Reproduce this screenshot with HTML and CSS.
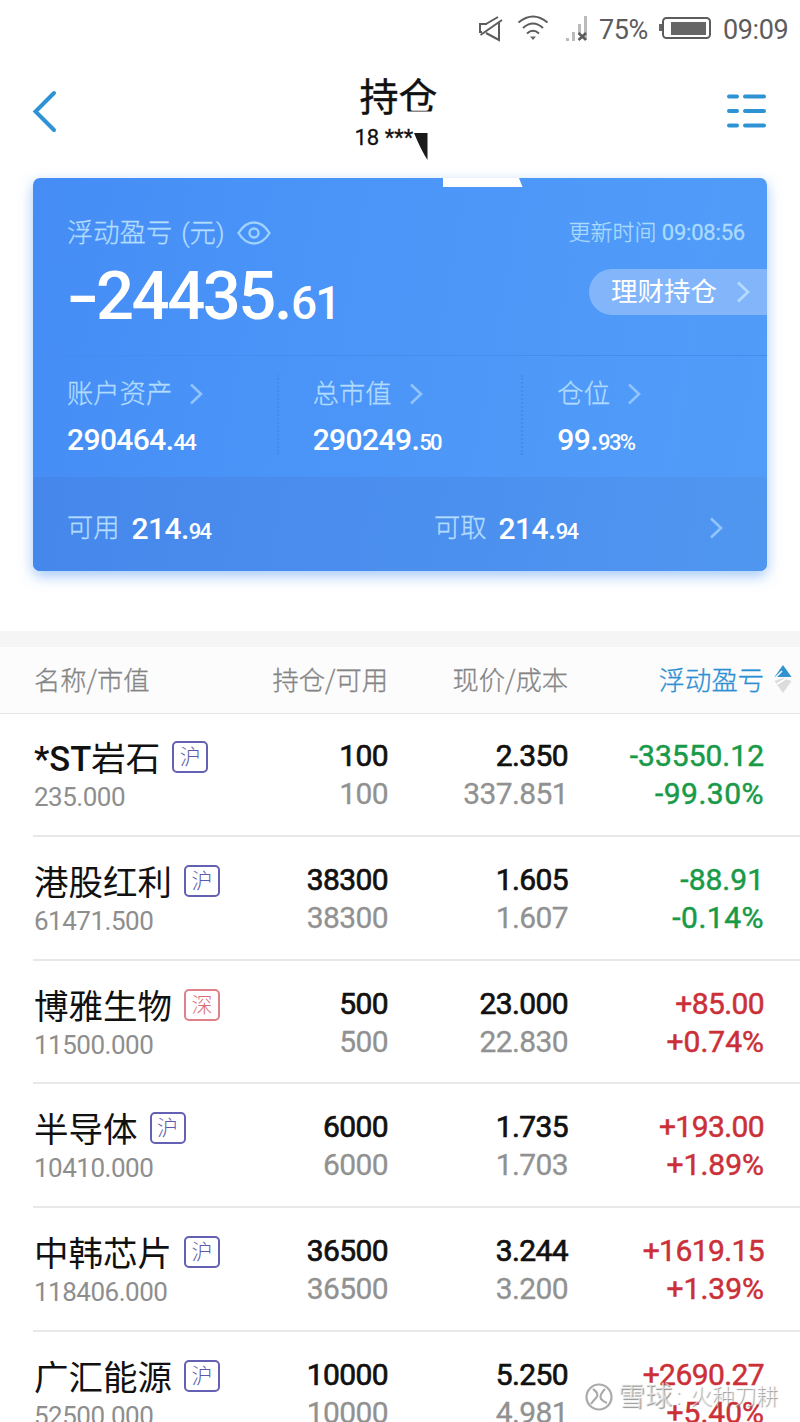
FILE: index.html
```html
<!DOCTYPE html>
<html lang="zh-CN">
<head>
  <meta charset="UTF-8" />
  <meta name="viewport" content="width=device-width, initial-scale=1.0" />
  <title>持仓</title>
  <link rel="stylesheet" href="styles.css">
</head>
<body>
  <div class="status-bar">
    <svg class="mute" width="26" height="28" viewBox="0 0 26 28"><path d="M9 9 H2 V17 H4 M8 9 L20 2 M21 7 V25 L8 18 M2.500 20 L24 5" /></svg>
    <svg class="wifi" width="32" height="28" viewBox="0 0 32 28"><path d="M1.5 7.5 Q16 -4.5 30.5 7.5 M6 13 Q16 4 26 13 M10 18.5 Q16 13 22 18.5" /><path class="dot" d="M13 21.5 H19 L16 25 Z" /></svg>
    <svg class="signal" width="22" height="27" viewBox="0 0 22 27"><path class="bars" d="M0 23h3v3H0z M6 17h3v9H6z M12 9h3v9h-3z M18 1h3v24h-3z" /><path class="cross" d="M12.5 18 L20 25 M20 18 L12.5 25" /></svg>
    <span class="battery-text">75%</span>
    <svg class="battery" width="52" height="24" viewBox="0 0 52 24"><rect x="4" y="1" width="47" height="20" rx="3.5" /><path class="fill" d="M12 5h35v13H12z M0 7h3v7H0z" /></svg>
    <span class="clock">09:09</span>
  </div>

  <div class="header">
    <svg class="back" width="26" height="44" viewBox="0 0 26 44"><path d="M22 4 L3.5 22.5 L22 41" /></svg>
    <div class="title">
      <h1>持仓</h1>
      <p>18 ***</p>
      <svg class="smudge" width="76" height="56" viewBox="0 0 76 56"><path class="white" d="M38 7.500 H70 V0 H76 V17 H38z" /><path d="M50 29 H63.5 V56 Q57 46 50 29z" /></svg>
    </div>
    <svg class="menu" width="40" height="38" viewBox="0 0 40 38"><path d="M2 3.500h8 M18 3.500h19 M2 18h8 M18 18h19 M2 32.500h8 M18 32.500h19" /></svg>
  </div>

  <div class="card">
    <svg class="notch" width="80" height="9" viewBox="0 0 80 9"><path d="M0 0 H76 L79.500 9 H0z" /></svg>
    <div class="profit">
      <div class="profit-left">
        <div class="label">浮动盈亏<span class="unit">(元)</span>
          <svg class="eye" width="34" height="24" viewBox="0 0 34 24"><path d="M1.500 12 C10 -2 24 -2 32.500 12 C24 26 10 26 1.500 12z" /><circle cx="17" cy="12" r="4.500" /></svg>
        </div>
        <div class="total"><span class="sign">-</span>24435.<small>61</small></div>
      </div>
      <div class="profit-right">
        <div class="update">更新时间 <span>09:08:56</span></div>
        <div class="pill">理财持仓<svg class="arrow" width="14" height="22" viewBox="0 0 14 22"><path d="M2 1.500 L12 11 L2 20.500" /></svg></div>
      </div>
    </div>
    <div class="assets">
      <div class="asset">
        <div class="label">账户资产<svg class="arrow" width="14" height="22" viewBox="0 0 14 22"><path d="M2 1.500 L12 11 L2 20.500" /></svg></div>
        <div class="num">290464.<small>44</small></div>
      </div>
      <div class="asset">
        <div class="label">总市值<svg class="arrow" width="14" height="22" viewBox="0 0 14 22"><path d="M2 1.500 L12 11 L2 20.500" /></svg></div>
        <div class="num">290249.<small>50</small></div>
      </div>
      <div class="asset">
        <div class="label">仓位<svg class="arrow" width="14" height="22" viewBox="0 0 14 22"><path d="M2 1.500 L12 11 L2 20.500" /></svg></div>
        <div class="num">99.<small>93%</small></div>
      </div>
    </div>
    <div class="cash">
      <div class="cash-item"><span class="label">可用</span><span class="num">214.<small>94</small></span></div>
      <div class="cash-item"><span class="label">可取</span><span class="num">214.<small>94</small></span></div>
      <svg class="arrow" width="14" height="22" viewBox="0 0 14 22"><path d="M2 1.500 L12 11 L2 20.500" /></svg>
    </div>
  </div>

  <div class="list">
    <div class="list-head">
      <span>名称/市值</span>
      <span>持仓/可用</span>
      <span>现价/成本</span>
      <span class="sorted">浮动盈亏<svg class="sort" width="18" height="30" viewBox="0 0 18 30"><path class="up" d="M9 1 L17.500 13 H.5z" /><path class="down" d="M.5 17 L9 14 L17.500 17 L9 29z" /><path class="line" d="M1 14 L8 7 M3 20 L13 14" /></svg></span>
    </div>

    <!-- Holdings -->
    <div class="row">
      <div class="stock"><div class="name"><b>*ST</b>岩石<i class="tag">沪</i></div><div class="value">235.000</div></div>
      <div class="cell"><p>100</p><p>100</p></div>
      <div class="cell"><p>2.350</p><p>337.851</p></div>
      <div class="cell down"><p>-33550.12</p><p>-99.30%</p></div>
    </div>
    <div class="row">
      <div class="stock"><div class="name">港股红利<i class="tag">沪</i></div><div class="value">61471.500</div></div>
      <div class="cell"><p>38300</p><p>38300</p></div>
      <div class="cell"><p>1.605</p><p>1.607</p></div>
      <div class="cell down"><p>-88.91</p><p>-0.14%</p></div>
    </div>
    <div class="row">
      <div class="stock"><div class="name">博雅生物<i class="tag sz">深</i></div><div class="value">11500.000</div></div>
      <div class="cell"><p>500</p><p>500</p></div>
      <div class="cell"><p>23.000</p><p>22.830</p></div>
      <div class="cell up"><p>+85.00</p><p>+0.74%</p></div>
    </div>
    <div class="row">
      <div class="stock"><div class="name">半导体<i class="tag">沪</i></div><div class="value">10410.000</div></div>
      <div class="cell"><p>6000</p><p>6000</p></div>
      <div class="cell"><p>1.735</p><p>1.703</p></div>
      <div class="cell up"><p>+193.00</p><p>+1.89%</p></div>
    </div>
    <div class="row">
      <div class="stock"><div class="name">中韩芯片<i class="tag">沪</i></div><div class="value">118406.000</div></div>
      <div class="cell"><p>36500</p><p>36500</p></div>
      <div class="cell"><p>3.244</p><p>3.200</p></div>
      <div class="cell up"><p>+1619.15</p><p>+1.39%</p></div>
    </div>
    <div class="row">
      <div class="stock"><div class="name">广汇能源<i class="tag">沪</i></div><div class="value">52500.000</div></div>
      <div class="cell"><p>10000</p><p>10000</p></div>
      <div class="cell"><p>5.250</p><p>4.981</p></div>
      <div class="cell up"><p>+2690.27</p><p>+5.40%</p></div>
    </div>
  </div>

  <div class="watermark">
    <svg width="28" height="28" viewBox="0 0 28 28"><circle cx="14" cy="14" r="12.500" /><path d="M8 6 Q15 11 11 15 Q8 18 6 21 M20 6 Q14 12 16 16 Q19 19 22 20" /></svg>
    <b>雪球</b><span class="colon">:</span><span>火种刀耕</span>
  </div>
</body>
</html>
```
FILE: styles.css
```css
* {
  box-sizing: border-box;
}
body {
  position: relative;
  width: 800px;
  height: 1422px;
  margin: 0;
  overflow: hidden;
  background: #fff;
  font-family: Roboto, "Noto Sans CJK SC", sans-serif;
  color: #111;
}
h1, p {
  margin: 0;
  font-weight: 400;
}
svg {
  flex: none;
  fill: none;
}

/* status bar */
.status-bar {
  display: flex;
  align-items: center;
  height: 56px;
  padding: 1px 11px 0 478px;
  font-size: 27px;
  color: #5c5c5c;
  stroke: #5c5c5c;
  stroke-width: 2;
}
.status-bar .wifi { margin-left: 13px; }
.status-bar .dot,
.status-bar .fill { fill: #666; stroke: none; }
.status-bar .signal { margin-left: 17px; }
.status-bar .bars { fill: #bbb; stroke: none; }
.status-bar .cross { stroke-width: 2.5; }
.status-bar span { stroke: none; line-height: 32px; letter-spacing: -0.4px; }
.battery-text { margin-left: 11px; width: 60px; padding-top: 2px; }
.clock { margin-left: 12px; padding-top: 2px; }

/* header */
.header {
  display: flex;
  justify-content: space-between;
  align-items: flex-start;
  height: 122px;
  padding: 33px 33px 0 32px;
}
.back { stroke: #2e93d4; stroke-width: 4; stroke-linecap: round; }
.menu { stroke: #2e93d4; stroke-width: 4; stroke-linecap: round; margin-top: 4px; }
.title {
  position: relative;
  width: 92px;
  margin: -15px 0 0 16px;
}
.title h1 {
  padding-left: 5px;
  font-size: 39px;
  line-height: 48px;
  -webkit-text-stroke: 0.4px;
}
.title p {
  margin-top: 3px;
  font-size: 22px;
  line-height: 26px;
  white-space: nowrap;
  -webkit-text-stroke: 0.3px;
}
.smudge { position: absolute; left: 9px; top: 30px; fill: #1a1a1a; }
.smudge .white { fill: #fff; }

/* account card */
.card {
  position: relative;
  width: 734px;
  height: 393px;
  margin: 0 33px;
  border-radius: 7px;
  background: linear-gradient(100deg, #458df5, #4d97f9 55%, #529cf8);
  box-shadow: 0 5px 14px rgba(74, 147, 248, 0.5);
  color: #fff;
}
.notch { position: absolute; left: 410px; top: 0; fill: #fff; }
.label {
  display: flex;
  align-items: center;
  font-size: 26.3px;
  line-height: 38px;
  font-weight: 300;
  color: #b2dcff;
  -webkit-text-stroke: 0.3px;
}
.arrow { stroke: #91c4fc; stroke-width: 2.6; }
.profit {
  display: flex;
  justify-content: space-between;
  height: 178px;
  padding: 36px 0 0 34px;
  border-bottom: 1px solid #458ded;
}
.unit { margin-left: 9px; }
.eye { margin-left: 13px; stroke: #9ed2ff; stroke-width: 2.4; }
.total {
  margin-top: 8px;
  font-size: 67px;
  line-height: 72px;
  font-weight: 500;
  letter-spacing: -2.5px;
}
.total .sign {
  display: inline-block;
  width: 29px;
  transform: scaleX(1.4);
  transform-origin: left;
}
.total small { margin-left: 1px; font-size: 46px; letter-spacing: -1.8px; }
.update {
  margin-right: 22px;
  font-size: 22px;
  line-height: 38px;
  color: #aadafe;
  font-weight: 300;
  text-align: right;
  -webkit-text-stroke: 0.3px;
}
.update span { font-weight: 400; letter-spacing: -0.2px; }
.pill {
  display: flex;
  align-items: center;
  width: 178px;
  height: 46px;
  margin: 17px 0 0 auto;
  padding-left: 22px;
  border-radius: 23px 0 0 23px;
  background: #83b5fb;
  font-size: 26.5px;
  line-height: 42px;
}
.pill .arrow { margin-left: 19px; stroke: #b5dbfe; }
.assets {
  display: flex;
  height: 121px;
  padding: 19px 0 22px;
}
.asset {
  position: relative;
  width: 245px;
  padding-left: 34px;
}
.asset + .asset { margin-left: -1px; padding-left: 34px; border-left: 2px dotted #438ced; width: 246px; }
.asset .arrow { margin-left: 17px; }
.num {
  font-size: 30px;
  line-height: 36px;
  font-weight: 500;
  letter-spacing: -0.6px;
}
.num small { font-size: 22px; letter-spacing: -1.6px; }
.asset .num { margin-top: 9px; }
.cash {
  display: flex;
  align-items: center;
  height: 94px;
  padding: 8px 44px 0 34px;
  border-radius: 0 0 7px 7px;
  background: linear-gradient(100deg, #4587eb, #4c90ef 60%, #5097f0);
}
.cash-item {
  display: flex;
  align-items: center;
  width: 367px;
}
.cash-item .num { margin-left: 12px; padding-top: 5px; }
.cash-item + .cash-item { width: 275px; }

/* holdings */
.list {
  margin-top: 60px;
  border-top: 16px solid #f5f5f5;
}
.list-head,
.row {
  display: grid;
  grid-template-columns: 200px 154px 180px 196px;
}
.list-head {
  height: 67px;
  margin-bottom: -1px;
  padding-left: 34px;
  background: #fcfcfc;
  border-bottom: 1px solid #e6e6e6;
  font-size: 26.3px;
  line-height: 63px;
  font-weight: 300;
  color: #858585;
  -webkit-text-stroke: 0.3px;
}
.list-head span { text-align: right; white-space: nowrap; font-family: "Noto Sans CJK SC", sans-serif; }
.list-head span:first-child { text-align: left; }
.list-head .sorted { position: relative; color: #2b8fd3; }
.sort { position: absolute; left: 206px; top: 17px; }
.sort .up { fill: #3192d2; }
.sort .down { fill: #dcdcdc; }
.sort .line { stroke: #fff; stroke-width: 1.5; }
.row {
  height: 123.75px;
  margin-left: 33px;
  padding: 21px 0 0 1px;
  border-bottom: 2px solid #e8e8e8;
}
.stock { padding-top: 2px; }
.name {
  display: flex;
  align-items: center;
  height: 46px;
  font-size: 34.5px;
  line-height: 46px;
  white-space: nowrap;
}
.name b { font-weight: 500; }
.tag {
  width: 36px;
  height: 32px;
  margin-left: 12px;
  margin-top: -4px;
  border: 2px solid #6461b4;
  border-radius: 5px;
  font-size: 21px;
  line-height: 28px;
  font-style: normal;
  font-weight: 300;
  text-align: center;
  color: #5c59ae;
}
.tag.sz { border-color: #e08088; color: #dc6e78; }
.value {
  font-size: 26px;
  line-height: 30px;
  letter-spacing: -0.5px;
  color: #8e8e8e;
}
.cell {
  padding-top: 3px;
  text-align: right;
  font-size: 30px;
  line-height: 38px;
  letter-spacing: -0.6px;
}
.cell p:first-child { -webkit-text-stroke: 0.7px; }
.cell p + p { color: #919191; -webkit-text-stroke: 0.3px; }
.cell.down p, .cell.up p { -webkit-text-stroke: 0.5px; }
.cell.down p { color: #189a48; letter-spacing: 0; }
.cell.down p + p { letter-spacing: 0.5px; }
.cell.up p { color: #cb2f38; }
.cell.up p + p { letter-spacing: 0; }

.watermark {
  position: absolute;
  left: 585px;
  top: 1382px;
  display: flex;
  align-items: center;
  height: 30px;
  font-size: 22px;
  line-height: 30px;
  font-weight: 300;
  color: rgba(255, 255, 255, 0.6);
  text-shadow: 1px 1px 1px rgba(120, 120, 120, 0.8);
}
.watermark svg { stroke: #aaa; stroke-width: 2.2; }
.watermark b { margin-left: 5px; font-size: 27px; }
.watermark .colon { width: 18px; padding-left: 4px; }
```
